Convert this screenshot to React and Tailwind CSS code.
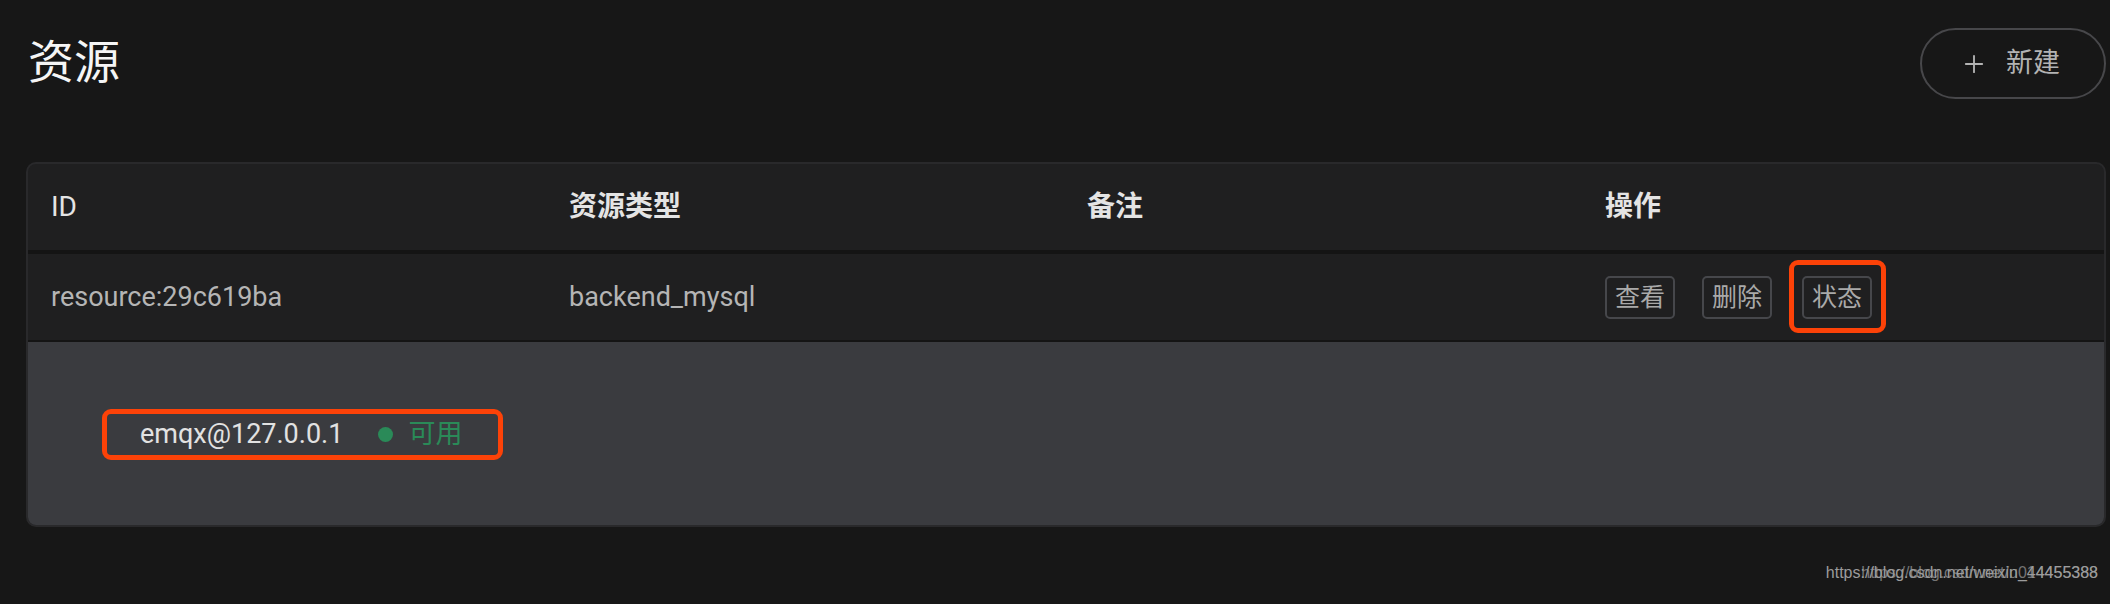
import { Plus } from "lucide-react";

const cjk = { fontFamily: 'Roboto, "Noto Sans CJK SC", sans-serif' };

const columns = ["ID", "资源类型", "备注", "操作"];

function ActionButton({ label }) {
    return (
        <button className="h-[43px] px-[8px] rounded-[5px] border-2 border-[#46474b] text-[25px] leading-none text-[#a9a9a9] bg-transparent">
            {label}
        </button>
    );
}

export default function App() {
    return (
        <div className="min-h-[604px] bg-[#171717] pl-[26px] pr-[4px] pt-[28px]" style={cjk}>
            {/* page header */}
            <div className="flex items-center justify-between h-[71px]">
                <h1 className="pl-[2px] text-[46px] leading-none text-[#f5f5f5] -mt-[4px]">资源</h1>
                <button className="w-[186px] h-[71px] rounded-full border-2 border-[#47474a] flex items-center justify-center gap-[18px] text-[#b3b3b3]">
                    <Plus size={28} strokeWidth={1.6} className="ml-[-6px]" />
                    <span className="text-[27px] leading-none">新建</span>
                </button>
            </div>

            {/* resources table */}
            <div className="mt-[63px] rounded-[10px] border-2 border-[#29292b] bg-[#1f1f20] overflow-hidden">
                <div className="grid grid-cols-[518px_518px_518px_1fr] h-[90px] items-center border-b-4 border-[#141414]">
                    {columns.map((c) => (
                        <div key={c} className="pl-[23px] text-[28px] font-bold text-[#e4e4e4]">
                            {c === "ID" ? <span className="font-normal">{c}</span> : c}
                        </div>
                    ))}
                </div>
                <div className="grid grid-cols-[518px_518px_518px_1fr] h-[88px] items-center border-b-2 border-[#141414] text-[27px] text-[#b5b5b5]">
                    <div className="pl-[23px]">resource:29c619ba</div>
                    <div className="pl-[23px]">backend_mysql</div>
                    <div className="pl-[23px]"></div>
                    <div className="pl-[23px] flex items-center gap-[27px]">
                        <ActionButton label="查看" />
                        <ActionButton label="删除" />
                        <div className="relative ml-[3px]">
                            <ActionButton label="状态" />
                            <div className="absolute -left-[13px] -top-[16px] -right-[14px] -bottom-[14px] rounded-[9px] border-[5px] border-[#fc4208]"></div>
                        </div>
                    </div>
                </div>

                {/* node status */}
                <div className="bg-[#3a3b3f] h-[183px] pl-[74px] pt-[67px]">
                    <div className="inline-flex items-center h-[51px] rounded-[9px] border-[5px] border-[#fc4208] pl-[33px] pr-[36px]">
                        <span className="text-[27px] text-[#e2e2e2]">emqx@127.0.0.1</span>
                        <span className="ml-[35px] w-[15px] h-[15px] rounded-full bg-[#2a8a58]"></span>
                        <span className="ml-[15px] text-[27px] text-[#2a8a58]">可用</span>
                    </div>
                </div>
            </div>

            {/* footer mark */}
            <div className="relative h-[60px]">
                <div className="absolute right-[8px] top-[38px] text-[16px] leading-none text-[#9c9c9c] whitespace-nowrap" style={{ fontFamily: '"Liberation Sans", sans-serif' }}>
                    https://blog.csdn.net/weixin_44455388
                </div>
                <div className="absolute right-[8px] top-[38px] text-[16px] leading-none text-[#9c9c9c] opacity-70 whitespace-nowrap" style={{ fontFamily: '"Liberation Sans", sans-serif' }}>
                    https://blog.csdn.net/u014455388
                </div>
            </div>
        </div>
    );
}
